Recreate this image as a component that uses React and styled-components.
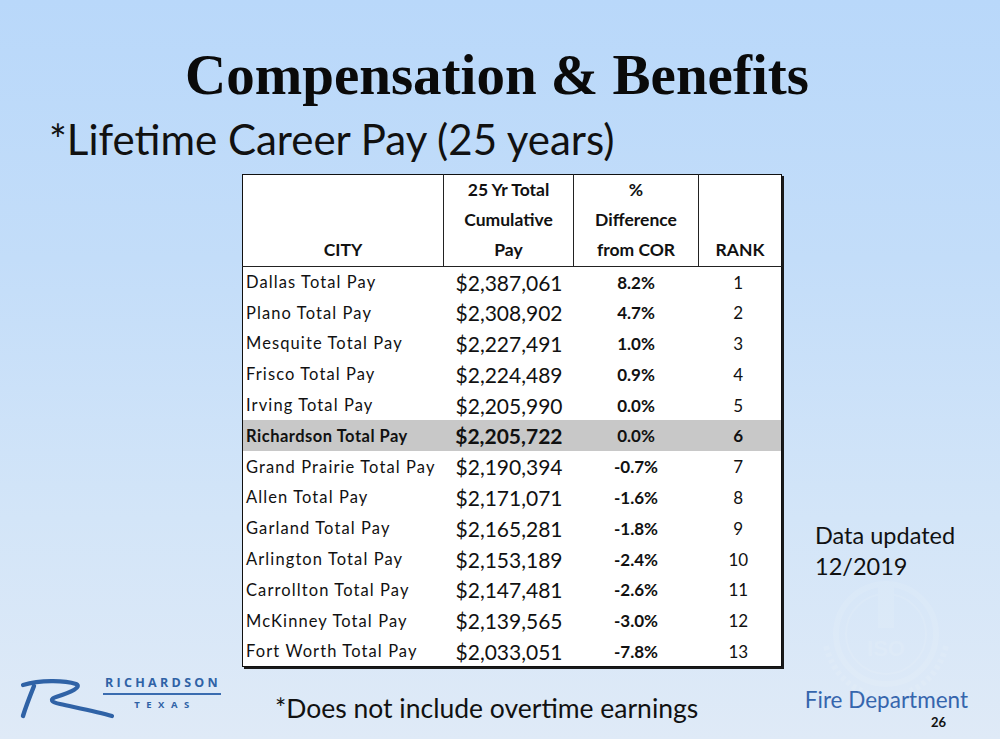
import React from "react";
import styled, { createGlobalStyle } from "styled-components";

const Global = createGlobalStyle`
  html, body { margin: 0; padding: 0; }
  body { background: #cfe2f8; }
`;

const Page = styled.div`
  position: relative;
  width: 1000px;
  height: 739px;
  overflow: hidden;
  display: flex;
  flex-direction: column;
  background: linear-gradient(180deg, #b9d8fa 0%, #c3ddf9 35%, #d3e5f8 70%, #dfeaf7 100%);
  font-family: Lato, "Open Sans", sans-serif;
  color: #111;
`;

const Title = styled.h1`
  margin: 42px 0 0 0;
  height: 66px;
  line-height: 66px;
  text-align: center;
  font-family: "Liberation Serif", "Times New Roman", serif;
  font-weight: 700;
  font-size: 57px;
  color: #0a0a0a;
  padding-right: 6px;
`;

const Subtitle = styled.h2`
  margin: 8px 0 0 49px;
  height: 46px;
  line-height: 46px;
  font-weight: 400;
  font-size: 42px;
  color: #111;
`;

const Middle = styled.div`
  display: flex;
  align-items: flex-end;
  margin-top: 12px;
  padding-left: 242px;
`;

const Table = styled.table`
  width: 535px;
  border-collapse: collapse;
  background: #fff;
  border: 1px solid #111;
  box-shadow: 2px 2px 0 #1a1a1a;
  table-layout: fixed;
`;

const HeadCell = styled.th`
  width: ${(p) => p.$w}px;
  height: 87px;
  padding: 0 0 1px 0;
  vertical-align: bottom;
  text-align: center;
  font-weight: 700;
  font-size: 17.5px;
  line-height: 30px;
  border-right: ${(p) => (p.$last ? "none" : "1px solid #222")};
  border-bottom: 1px solid #222;
  color: #111;
`;

const Row = styled.tr`
  height: 30.8px;
  background: ${(p) => (p.$hl ? "#c8c8c8" : "#fff")};
  font-weight: ${(p) => (p.$hl ? 700 : 400)};
`;

const CityCell = styled.td`
  padding: 0 0 0 3px;
  font-size: 16.5px;
  letter-spacing: ${(p) => (p.$hl ? "0.5px" : "1.1px")};
  white-space: nowrap;
  overflow: visible;
`;

const PayCell = styled.td`
  padding: 0 11px 0 0;
  text-align: right;
  font-size: 21px;
`;

const DiffCell = styled.td`
  text-align: center;
  font-size: 17px;
  font-weight: 700;
`;

const RankCell = styled.td`
  text-align: center;
  font-size: 17px;
  padding-right: 4px;
`;

const SideNote = styled.div`
  margin: 0 0 85px 33px;
  font-size: 23.5px;
  line-height: 31px;
  color: #111;
`;

const Footer = styled.div`
  display: flex;
  align-items: flex-start;
  margin-top: 3px;
  height: 70px;
`;

const Logo = styled.div`
  display: flex;
  align-items: flex-start;
  margin: 6px 0 0 20px;
  width: 206px;
`;

const LogoWords = styled.div`
  display: flex;
  flex-direction: column;
  align-items: center;
  margin: 0 0 0 -5px;
  color: #2f62a6;
`;

const LogoMain = styled.div`
  font-family: "Open Sans", sans-serif;
  font-weight: 700;
  font-size: 12.5px;
  letter-spacing: 3.3px;
  padding: 0 0 3px 2px;
  border-bottom: 2px solid #3a6cb0;
  line-height: 14px;
`;

const LogoSub = styled.div`
  font-family: "Open Sans", sans-serif;
  font-weight: 700;
  font-size: 9.5px;
  letter-spacing: 6.5px;
  padding-top: 4px;
  line-height: 11px;
  padding-left: 6px;
`;

const FootNote = styled.div`
  margin: 22px 0 0 49px;
  font-size: 26.5px;
  line-height: 32px;
  color: #111;
`;

const Dept = styled.div`
  margin: 17px 32px 0 auto;
  display: flex;
  flex-direction: column;
  align-items: flex-end;
`;

const DeptName = styled.div`
  font-size: 22.5px;
  color: #3565ad;
  line-height: 26px;
`;

const PageNum = styled.div`
  font-size: 13px;
  font-weight: 700;
  color: #111;
  margin-right: 22px;
  line-height: 18px;
`;

const Seal = styled.svg`
  position: absolute;
  left: 806px;
  top: 556px;
  width: 160px;
  height: 160px;
  opacity: 0.09;
  pointer-events: none;
`;

const cols = [200, 129, 124, 82];

const rows = [
  ["Dallas Total Pay", "$2,387,061", "8.2%", 1],
  ["Plano Total Pay", "$2,308,902", "4.7%", 2],
  ["Mesquite Total Pay", "$2,227,491", "1.0%", 3],
  ["Frisco Total Pay", "$2,224,489", "0.9%", 4],
  ["Irving Total Pay", "$2,205,990", "0.0%", 5],
  ["Richardson Total Pay", "$2,205,722", "0.0%", 6, true],
  ["Grand Prairie Total Pay", "$2,190,394", "-0.7%", 7],
  ["Allen Total Pay", "$2,171,071", "-1.6%", 8],
  ["Garland Total Pay", "$2,165,281", "-1.8%", 9],
  ["Arlington Total Pay", "$2,153,189", "-2.4%", 10],
  ["Carrollton Total Pay", "$2,147,481", "-2.6%", 11],
  ["McKinney Total Pay", "$2,139,565", "-3.0%", 12],
  ["Fort Worth Total Pay", "$2,033,051", "-7.8%", 13],
];

const RSvg = styled.svg`
  flex: none;
  overflow: visible;
`;

function RLogo() {
  return (
    <RSvg width="88" height="44" viewBox="0 0 88 44">
      <path
        d="M3 9 C 20 4, 44 4, 56 8 C 62 11, 52 16, 36 21 C 30 23, 30 26, 40 28 C 58 32, 78 36, 92 40"
        fill="none"
        stroke="#2f62a6"
        strokeWidth="4.2"
        strokeLinecap="round"
      />
      <path d="M14 10 C 10 20, 6 30, 3 40" fill="none" stroke="#2f62a6" strokeWidth="4.4" strokeLinecap="round" />
    </RSvg>
  );
}

export default function App() {
  return (
    <>
      <Global />
      <Page>
        <Seal viewBox="0 0 160 160">
          <circle cx="80" cy="78" r="50" fill="none" stroke="#ffffff" strokeWidth="6" />
          <circle cx="80" cy="78" r="40" fill="none" stroke="#ffffff" strokeWidth="2" />
          <rect x="72" y="30" width="16" height="42" fill="#ffffff" />
          <text x="80" y="100" textAnchor="middle" fontSize="22" fontWeight="700" fill="#ffffff" fontFamily="Liberation Sans, sans-serif">ISO</text>
          <path d="M20 90 Q 30 130 70 140 M140 90 Q 130 130 90 140" fill="none" stroke="#ffffff" strokeWidth="6" strokeDasharray="4 3" />
        </Seal>
        <Title>Compensation &amp; Benefits</Title>
        <Subtitle>*Lifetime Career Pay (25 years)</Subtitle>
        <Middle>
          <Table>
            <thead>
              <tr>
                <HeadCell $w={cols[0]}>CITY</HeadCell>
                <HeadCell $w={cols[1]}>25 Yr Total<br />Cumulative<br />Pay</HeadCell>
                <HeadCell $w={cols[2]}>%<br />Difference<br />from COR</HeadCell>
                <HeadCell $w={cols[3]} $last>RANK</HeadCell>
              </tr>
            </thead>
            <tbody>
              {rows.map(([city, pay, diff, rank, hl]) => (
                <Row key={city} $hl={hl}>
                  <CityCell $hl={hl}>{city}</CityCell>
                  <PayCell>{pay}</PayCell>
                  <DiffCell>{diff}</DiffCell>
                  <RankCell>{rank}</RankCell>
                </Row>
              ))}
            </tbody>
          </Table>
          <SideNote>Data updated<br />12/2019</SideNote>
        </Middle>
        <Footer>
          <Logo>
            <RLogo />
            <LogoWords>
              <LogoMain>RICHARDSON</LogoMain>
              <LogoSub>TEXAS</LogoSub>
            </LogoWords>
          </Logo>
          <FootNote>*Does not include overtime earnings</FootNote>
          <Dept>
            <DeptName>Fire Department</DeptName>
            <PageNum>26</PageNum>
          </Dept>
        </Footer>
      </Page>
    </>
  );
}
